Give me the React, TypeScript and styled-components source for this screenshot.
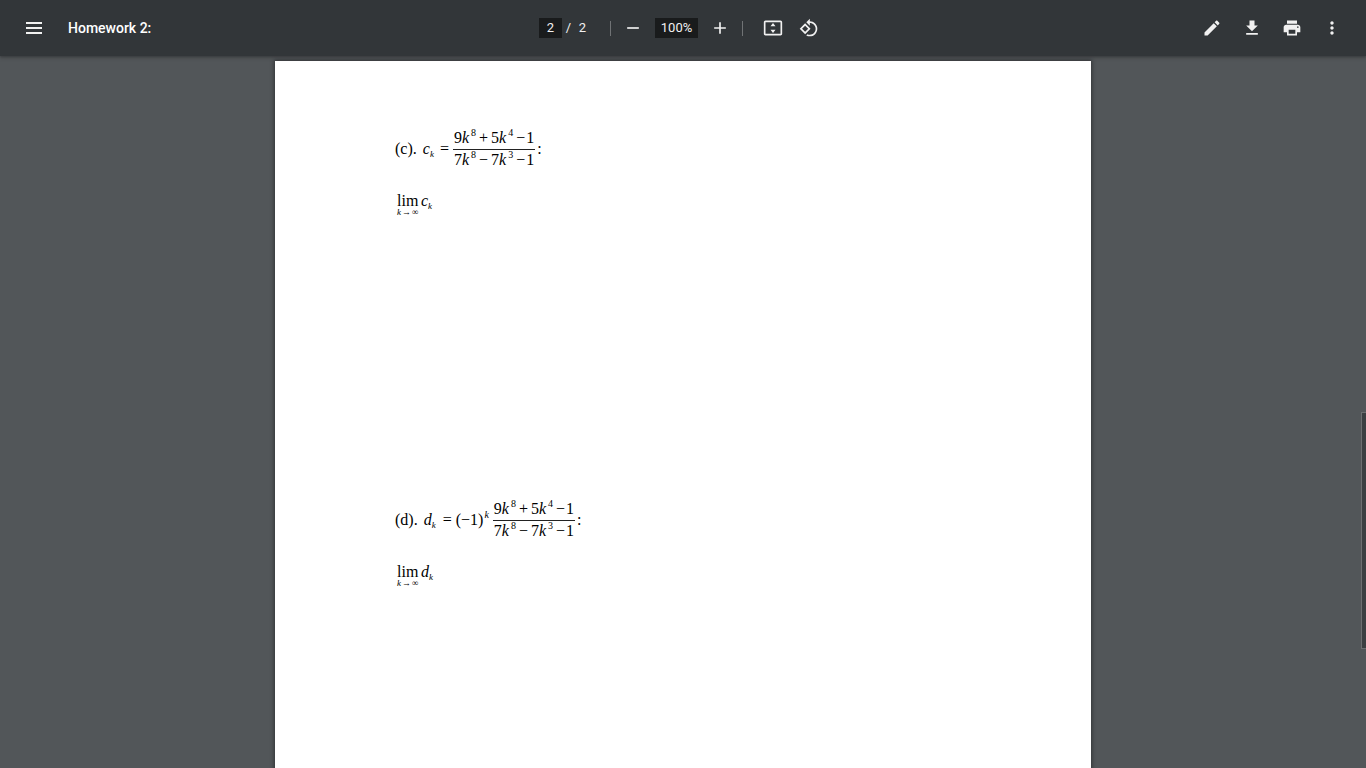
import React from "react";
import styled, { createGlobalStyle } from "styled-components";

const GlobalStyle = createGlobalStyle`
  *, *::before, *::after { box-sizing: border-box; }
  body { margin: 0; background: #525659; }
`;

const Viewer = styled.div`
  display: flex;
  flex-direction: column;
  height: 100vh;
  overflow: hidden;
  font-family: Roboto, "Liberation Sans", sans-serif;
  font-size: 13px;
  color: #f1f1f1;
`;

const Toolbar = styled.header`
  display: grid;
  grid-template-columns: 1fr auto 1fr;
  align-items: center;
  flex: none;
  height: 56px;
  background: #323639;
  z-index: 2;
  box-shadow: 0 2px 4px rgba(0, 0, 0, 0.15), 0 1px 2px rgba(0, 0, 0, 0.2);
`;

const StartGroup = styled.div`
  display: flex;
  align-items: center;
  padding-left: 18px;
`;

const CenterGroup = styled.div`
  display: flex;
  align-items: center;
  padding-right: 2px;
`;

const EndGroup = styled.div`
  display: flex;
  align-items: center;
  justify-content: flex-end;
  gap: 8px;
  padding-right: 18px;
`;

const IconButton = styled.button<{ $size?: number }>`
  display: grid;
  place-items: center;
  width: 32px;
  height: 32px;
  padding: 0;
  border: 0;
  border-radius: 50%;
  background: none;
  color: inherit;
  cursor: pointer;

  svg {
    width: ${(p) => p.$size ?? 20}px;
    height: ${(p) => p.$size ?? 20}px;
    fill: currentColor;
  }
`;

const Title = styled.h1`
  margin: 0 0 0 18px;
  font-size: 14px;
  font-weight: 500;
  line-height: 20px;
  color: #fff;
`;

const Field = styled.input<{ $width: number }>`
  width: ${(p) => p.$width}px;
  height: 20px;
  padding: 0;
  border: 0;
  background: #191b1c;
  color: inherit;
  font: inherit;
  line-height: 20px;
  text-align: center;
`;

const PageText = styled.span<{ $width: number }>`
  width: ${(p) => p.$width}px;
  line-height: 20px;
  text-align: center;
`;

const Divider = styled.span`
  width: 1px;
  height: 15px;
  background: #707375;
`;

const PageCount = styled.div`
  display: flex;
  margin-right: 20px;
`;

const ZoomGroup = styled.div`
  display: flex;
  align-items: center;
  gap: 6px;
  margin: 0 6px;
`;

const ViewGroup = styled.div`
  display: flex;
  gap: 4px;
  margin-left: 14px;
`;

const Content = styled.main`
  position: relative;
  flex: 1;
  min-height: 0;
  overflow: hidden;
  padding: 5px 5px 0;
`;

const ScrollThumb = styled.div`
  position: absolute;
  top: 50%;
  right: 0;
  width: 5px;
  height: 33.3%;
  border: 1px solid #6c6f71;
  border-right: 0;
  background: #3b3f42;
`;

const Page = styled.article`
  max-width: 816px;
  min-height: 1056px;
  margin: 0 auto;
  padding: 67px 120px 0;
  background: #fff;
  color: #000;
  box-shadow: 0 0 4px 1px rgba(0, 0, 0, 0.4);
  font-family: "Liberation Serif", "Times New Roman", serif;
  font-size: 16px;
  line-height: 20px;
`;

const Problem = styled.section`
  min-height: 371px;
`;

const Equation = styled.div`
  display: flex;
  align-items: center;
  white-space: nowrap;
`;

const Label = styled.span`
  margin-right: 6px;
`;

const Sub = styled.sub`
  display: inline-block;
  font-size: 9px;
  font-style: italic;
  line-height: 9px;
  vertical-align: -3px;
`;

const Sup = styled.sup<{ $gap?: number }>`
  display: inline-block;
  margin-left: ${(p) => p.$gap ?? 2}px;
  font-size: 10px;
  line-height: 10px;
  vertical-align: 7px;
`;

const Operator = styled.span<{ $before?: number; $after?: number }>`
  margin-left: ${(p) => p.$before ?? 0}px;
  margin-right: ${(p) => p.$after ?? 0}px;
`;

const Fraction = styled.span`
  display: flex;
  flex-direction: column;
  margin: 0 2px 0 4px;
`;

const Numerator = styled.span`
  padding: 0 1px 1px;
  border-bottom: 1px solid #222;
`;

const Denominator = styled.span`
  padding: 0 1px;
`;

const Limit = styled.div`
  display: flex;
  gap: 2px;
  margin-top: 21px;
  padding-left: 2px;
`;

const LimitName = styled.span`
  display: flex;
  flex-direction: column;
  width: 22px;
`;

const LimitRange = styled.span`
  display: flex;
  gap: 1px;
  margin-top: -3px;
  font-size: 9px;
  line-height: 8px;
  white-space: nowrap;
`;

const Icon = ({ d }: { d: string }) => (
  <svg viewBox="0 0 24 24" aria-hidden="true">
    <path d={d} />
  </svg>
);

const icons = {
  menu: "M4 6h16v2H4zM4 11h16v2H4zM4 16h16v2H4z",
  remove: "M19 13H5v-2h14v2z",
  add: "M19 13h-6v6h-2v-6H5v-2h6V5h2v6h6v2z",
  fit: "M21 3H3c-1.1 0-2 .9-2 2v14c0 1.1.9 2 2 2h18c1.1 0 2-.9 2-2V5c0-1.1-.9-2-2-2zm0 16H3V5h18v14zM9 10h6L12 6zM9 14h6L12 18z",
  rotate:
    "M7.34 6.41L.86 12.9l6.49 6.48 6.49-6.48-6.5-6.49zM3.69 12.9l3.66-3.66L11 12.9l-3.66 3.66-3.65-3.66zm15.67-6.26C17.61 4.88 15.3 4 13 4V.76L8.76 5 13 9.24V6c1.79 0 3.58.68 4.95 2.05 2.73 2.73 2.73 7.17 0 9.9C16.58 19.32 14.79 20 13 20c-.97 0-1.94-.21-2.84-.61l-1.49 1.49C10.02 21.62 11.51 22 13 22c2.3 0 4.61-.88 6.36-2.64 3.52-3.51 3.52-9.21 0-12.72z",
  edit: "M3 17.25V21h3.75L17.81 9.94l-3.75-3.75L3 17.25zM20.71 7.04c.39-.39.39-1.02 0-1.41l-2.34-2.34c-.39-.39-1.02-.39-1.41 0l-1.83 1.83 3.75 3.75 1.83-1.83z",
  download: "M19 9h-4V3H9v6H5l7 7 7-7zM5 18v2h14v-2H5z",
  print:
    "M19 8H5c-1.66 0-3 1.34-3 3v6h4v4h12v-4h4v-6c0-1.66-1.34-3-3-3zm-3 11H8v-5h8v5zm3-7c-.55 0-1-.45-1-1s.45-1 1-1 1 .45 1 1-.45 1-1 1zm-1-9H6v4h12V3z",
  more: "M12 8c1.1 0 2-.9 2-2s-.9-2-2-2-2 .9-2 2 .9 2 2 2zm0 2c-1.1 0-2 .9-2 2s.9 2 2 2 2-.9 2-2-.9-2-2-2zm0 6c-1.1 0-2 .9-2 2s.9 2 2 2 2-.9 2-2-.9-2-2-2z",
};

const Ratio = () => (
  <Fraction>
    <Numerator>
      9<i>k</i>
      <Sup>8</Sup>
      <Operator $before={3} $after={3}>+</Operator>5<i>k</i>
      <Sup>4</Sup>
      <Operator $before={3} $after={1}>−</Operator>1
    </Numerator>
    <Denominator>
      7<i>k</i>
      <Sup>8</Sup>
      <Operator $before={3} $after={3}>−</Operator>7<i>k</i>
      <Sup>3</Sup>
      <Operator $before={3} $after={1}>−</Operator>1
    </Denominator>
  </Fraction>
);

const LimitOf = ({ name }: { name: string }) => (
  <Limit>
    <LimitName>
      <span>lim</span>
      <LimitRange>
        <i>k</i>
        <span>→</span>
        <span>∞</span>
      </LimitRange>
    </LimitName>
    <span>
      <i>{name}</i>
      <Sub>k</Sub>
    </span>
  </Limit>
);

export default function App() {
  return (
    <Viewer>
      <GlobalStyle />
      <Toolbar>
        <StartGroup>
          <IconButton aria-label="Menu" $size={24}><Icon d={icons.menu} /></IconButton>
          <Title>Homework 2:</Title>
        </StartGroup>
        <CenterGroup>
          <PageCount>
            <Field $width={23} aria-label="Page number" defaultValue="2" />
            <PageText $width={13}>/</PageText>
            <PageText $width={15}>2</PageText>
          </PageCount>
          <Divider />
          <ZoomGroup>
            <IconButton aria-label="Zoom out"><Icon d={icons.remove} /></IconButton>
            <Field $width={43} aria-label="Zoom level" defaultValue="100%" />
            <IconButton aria-label="Zoom in"><Icon d={icons.add} /></IconButton>
          </ZoomGroup>
          <Divider />
          <ViewGroup>
            <IconButton aria-label="Fit to page"><Icon d={icons.fit} /></IconButton>
            <IconButton aria-label="Rotate counterclockwise"><Icon d={icons.rotate} /></IconButton>
          </ViewGroup>
        </CenterGroup>
        <EndGroup>
          <IconButton aria-label="Annotate"><Icon d={icons.edit} /></IconButton>
          <IconButton aria-label="Download"><Icon d={icons.download} /></IconButton>
          <IconButton aria-label="Print"><Icon d={icons.print} /></IconButton>
          <IconButton aria-label="More actions"><Icon d={icons.more} /></IconButton>
        </EndGroup>
      </Toolbar>
      <Content>
        <Page>
          <Problem>
            <Equation>
              <Label>(c).</Label>
              <span>
                <i>c</i>
                <Sub>k</Sub>
                <Operator $before={6}>=</Operator>
              </span>
              <Ratio />
              <span>:</span>
            </Equation>
            <LimitOf name="c" />
          </Problem>
          <Problem>
            <Equation>
              <Label>(d).</Label>
              <span>
                <i>d</i>
                <Sub>k</Sub>
                <Operator $before={7} $after={4}>=</Operator>
                (−1)<Sup $gap={1}><i>k</i></Sup>
              </span>
              <Ratio />
              <span>:</span>
            </Equation>
            <LimitOf name="d" />
          </Problem>
        </Page>
        <ScrollThumb />
      </Content>
    </Viewer>
  );
}
